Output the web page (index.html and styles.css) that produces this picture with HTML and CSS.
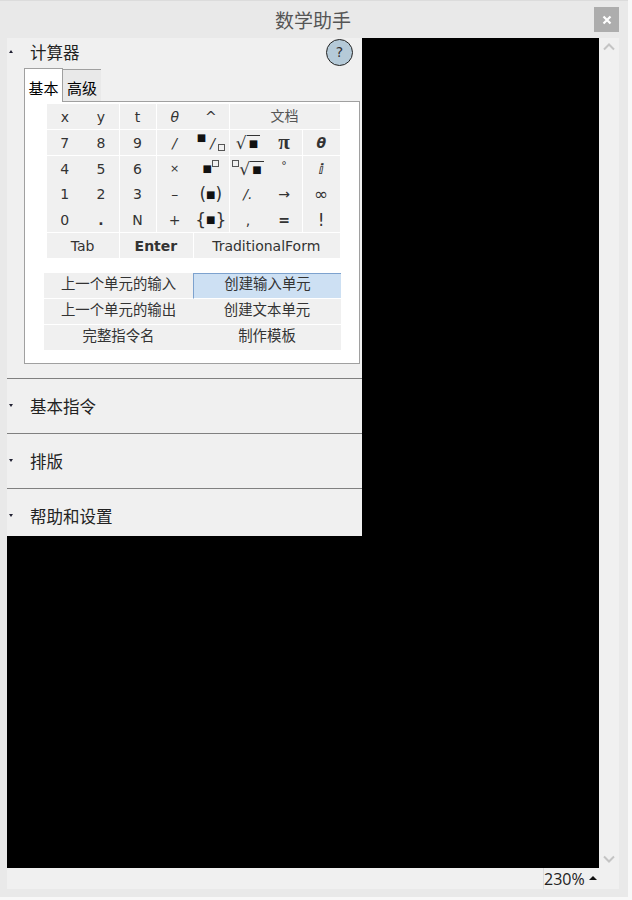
FILE: index.html
```html
<!DOCTYPE html>
<html lang="zh">

  <head>
    <meta charset="UTF-8">
    <title>数学助手</title>
    <link rel="stylesheet" href="styles.css">
  </head>

  <body>
    <div class="window">
      <div class="titlebar">
        <span class="title">数学助手</span>
        <button class="close">
          <svg width="10" height="10" viewBox="0 0 10 10"><path d="M1.5 1.5l7 7M8.5 1.5l-7 7" stroke="#fff" stroke-width="2.2" fill="none"/></svg>
        </button>
      </div>

      <div class="content">
        <div class="canvas">
          <div class="panel">
            <section class="section section-open">
              <div class="section-head">
                <span class="arrow arrow-up"></span>
                <span class="section-name">计算器</span>
                <span class="help">?</span>
              </div>

              <div class="tabs">
                <div class="tab tab-active">基本</div>
                <div class="tab">高级</div>
              </div>

              <div class="tab-frame">
                <div class="keys">
                  <div class="key no-line">x</div>
                  <div class="key">y</div>
                  <div class="key">t</div>
                  <div class="key no-line ital">θ</div>
                  <div class="key">^</div>
                  <div class="key span-3 cjk">文档</div>

                  <div class="key no-line">7</div>
                  <div class="key">8</div>
                  <div class="key">9</div>
                  <div class="key no-line ital">/</div>
                  <div class="key"><span class="box up">■</span><span class="ital frac">/</span><span class="hollow down"></span></div>
                  <div class="key no-line"><span class="root">√</span><span class="root-box">■</span></div>
                  <div class="key pi">π</div>
                  <div class="key end ital strong">θ</div>

                  <div class="key merged no-line">4</div>
                  <div class="key merged">5</div>
                  <div class="key merged">6</div>
                  <div class="key merged no-line small">×</div>
                  <div class="key merged"><span class="box">■</span><span class="hollow up"></span></div>
                  <div class="key merged no-line"><span class="hollow up"></span><span class="root">√</span><span class="root-box">■</span></div>
                  <div class="key merged small up-text">°</div>
                  <div class="key merged end ital strong">ⅈ</div>

                  <div class="key merged no-line">1</div>
                  <div class="key merged">2</div>
                  <div class="key merged">3</div>
                  <div class="key merged no-line">–</div>
                  <div class="key merged big">(<span class="box">■</span>)</div>
                  <div class="key merged no-line ital">/.</div>
                  <div class="key merged">→</div>
                  <div class="key merged end big">∞</div>

                  <div class="key bottom no-line">0</div>
                  <div class="key bottom strong">.</div>
                  <div class="key bottom">N</div>
                  <div class="key bottom no-line">+</div>
                  <div class="key bottom big">{<span class="box">■</span>}</div>
                  <div class="key bottom no-line">,</div>
                  <div class="key bottom strong">=</div>
                  <div class="key bottom end big">!</div>

                  <div class="key span-2 wide">Tab</div>
                  <div class="key span-2 strong wide">Enter</div>
                  <div class="key span-4 end wide">TraditionalForm</div>
                </div>

                <div class="cells">
                  <div class="cell">上一个单元的输入</div>
                  <div class="cell cell-hover">创建输入单元</div>
                  <div class="cell">上一个单元的输出</div>
                  <div class="cell">创建文本单元</div>
                  <div class="cell">完整指令名</div>
                  <div class="cell">制作模板</div>
                </div>
              </div>
            </section>

            <section class="section">
              <div class="section-head">
                <span class="arrow"></span>
                <span class="section-name">基本指令</span>
              </div>
            </section>
            <section class="section">
              <div class="section-head">
                <span class="arrow"></span>
                <span class="section-name">排版</span>
              </div>
            </section>
            <section class="section section-last">
              <div class="section-head">
                <span class="arrow"></span>
                <span class="section-name">帮助和设置</span>
              </div>
            </section>
          </div>
        </div>

        <div class="scrollbar">
          <svg width="14" height="10" viewBox="0 0 14 10"><path d="M2 7.5l5-5 5 5" stroke="#c4c4c4" stroke-width="2" fill="none"/></svg>
          <svg width="14" height="10" viewBox="0 0 14 10"><path d="M2 2.5l5 5 5-5" stroke="#c4c4c4" stroke-width="2" fill="none"/></svg>
        </div>
      </div>

      <div class="statusbar">
        <div class="zoom">230%<span class="zoom-arrow"></span></div>
      </div>
    </div>
  </body>

</html>
```

FILE: styles.css
```css
:root {
  --frame: #e9e9e9;
  --panel: #f0f0f0;
  --line: #808080;
  --key-text: #333;
}

html,
body {
  margin: 0;
  height: 100%;
  background-color: #f8f8f8;
}

body {
  font-family: "Noto Sans CJK SC", "DejaVu Sans", sans-serif;
  overflow: hidden;
}

.window {
  width: 628px;
  height: 897px;
  box-sizing: border-box;
  padding: 1px 9px 0 7px;
  background-color: var(--frame);
  border-top: 1px solid #dcdcdc;
  display: flex;
  flex-direction: column;
}

.titlebar {
  height: 36px;
  flex: none;
  display: flex;
  align-items: flex-start;
  justify-content: flex-end;
  position: relative;
}

.title {
  position: absolute;
  left: 268px;
  top: 4px;
  font-size: 19px;
  line-height: 28px;
  color: #555;
}

.close {
  width: 25px;
  height: 25px;
  margin: 5px 0 0;
  padding: 0;
  border: none;
  background-color: #adadad;
  display: flex;
  align-items: center;
  justify-content: center;
}

.content {
  height: 830px;
  flex: none;
  display: flex;
}

.canvas {
  width: 592px;
  background-color: #000;
}

.scrollbar {
  width: 20px;
  background-color: var(--panel);
  display: flex;
  flex-direction: column;
  align-items: center;
  justify-content: space-between;
  padding: 4px 0;
  box-sizing: border-box;
}

.statusbar {
  width: 612px;
  height: 21px;
  flex: none;
  background-color: var(--panel);
  box-sizing: border-box;
  padding-left: 536px;
}

.zoom {
  height: 21px;
  border-left: 1px solid #dcdcdc;
  font-family: "Open Sans", sans-serif;
  font-size: 16px;
  line-height: 22px;
  padding-top: 1px;
  box-sizing: border-box;
  color: #222;
  display: flex;
  align-items: center;
}

.zoom-arrow {
  margin: 0 0 2px 4px;
  border-left: 4px solid transparent;
  border-right: 4px solid transparent;
  border-bottom: 4px solid #111;
}

.panel {
  width: 355px;
  background-color: var(--panel);
}

.section {
  height: 54px;
  border-top: 1px solid var(--line);
}

.section-open {
  height: 340px;
  border-top: none;
}

.section-last {
  height: 47px;
}

.section-head {
  height: 30px;
  padding-top: 13px;
  display: flex;
  align-items: center;
  position: relative;
}

.section-open .section-head {
  height: 30px;
  padding-top: 0;
}

.arrow {
  width: 0;
  height: 0;
  margin: 0 0 4px 2px;
  border-left: 2.5px solid transparent;
  border-right: 2.5px solid transparent;
  border-top: 3px solid #223;
}

.arrow-up {
  border-top: none;
  border-bottom: 3px solid #223;
}

.section-name {
  margin: 0 0 3px 17px;
  font-size: 16.5px;
  color: #222;
}

.help {
  position: absolute;
  left: 319px;
  top: 1px;
  width: 25px;
  height: 25px;
  border: 1.5px solid #222;
  border-radius: 50%;
  background-color: #b5cad8;
  font-family: "DejaVu Sans", sans-serif;
  font-size: 14px;
  line-height: 25px;
  text-align: center;
  color: #333;
}

.tabs {
  display: flex;
  height: 33px;
  margin-left: 17px;
  position: relative;
  z-index: 1;
}

.tab {
  width: 38px;
  height: 32px;
  margin-top: 1px;
  box-sizing: border-box;
  border-top: 1px solid #a0a0a0;
  font-size: 15px;
  line-height: 35px;
  text-align: center;
  color: #000;
  background-color: var(--frame);
}

.tab-active {
  width: 39px;
  height: 34px;
  margin-top: 0;
  border: 1px solid #a0a0a0;
  border-bottom: none;
  background-color: #fff;
  line-height: 38px;
}

.tab-frame {
  width: 336px;
  height: 263px;
  margin-left: 17px;
  box-sizing: border-box;
  border: 1px solid #a0a0a0;
  background-color: #fff;
  padding: 2px 0 0 22px;
}

.keys {
  width: 293px;
  display: grid;
  grid-template-columns: repeat(8, 1fr);
  grid-template-rows: 26px 26px 25.67px 25.67px 25.67px 26px;
  font-family: "DejaVu Sans", sans-serif;
  font-size: 14px;
  color: var(--key-text);
}

.key {
  background-color: var(--panel);
  border-right: 1px solid #fff;
  border-bottom: 1px solid #fff;
  padding-right: 1px;
  display: flex;
  align-items: center;
  justify-content: center;
  white-space: nowrap;
}

.no-line {
  border-right: none;
}

.merged {
  border-bottom: none;
}

.end {
  border-right: none;
}

.span-2 {
  grid-column: span 2;
}

.span-3 {
  grid-column: span 3;
  border-right: none;
}

.span-4 {
  grid-column: span 4;
}

.cjk {
  font-family: "Noto Sans CJK SC", sans-serif;
  color: #555;
  padding-bottom: 3px;
}

.ital {
  font-style: italic;
}

.strong {
  font-weight: bold;
}

.small {
  font-size: 11px;
}

.big {
  font-size: 17px;
}

.wide {
  padding-top: 1px;
}

.pi {
  font-family: "Liberation Serif", serif;
  font-size: 21px;
  font-weight: bold;
}

.up-text {
  padding-bottom: 6px;
}

.frac {
  margin: 0 3px 0 4px;
}

.box {
  font-size: 10px;
  color: #111;
}

.root {
  font-size: 17px;
}

.root-box {
  font-size: 10px;
  color: #111;
  border-top: 1px solid #333;
  padding: 1px 2px 0;
  line-height: 13px;
}

.hollow {
  display: inline-block;
  width: 5px;
  height: 5px;
  border: 1px solid #555;
}

.up {
  position: relative;
  top: -5px;
}

.down {
  position: relative;
  top: 5px;
}

.cells {
  width: 297px;
  margin: 14px 0 0 -3px;
  display: grid;
  grid-template-columns: 149px 148px;
  grid-auto-rows: 26px;
  font-size: 14.4px;
  color: #333;
}

.cell {
  background-color: var(--panel);
  border-bottom: 1px solid #fff;
  padding-bottom: 5px;
  box-sizing: border-box;
  display: flex;
  align-items: center;
  justify-content: center;
}

.cell-hover {
  background-color: #cde0f3;
  border-top: 1px solid #7da2ce;
  border-left: 1px solid #7da2ce;
  padding-bottom: 6px;
}
```
